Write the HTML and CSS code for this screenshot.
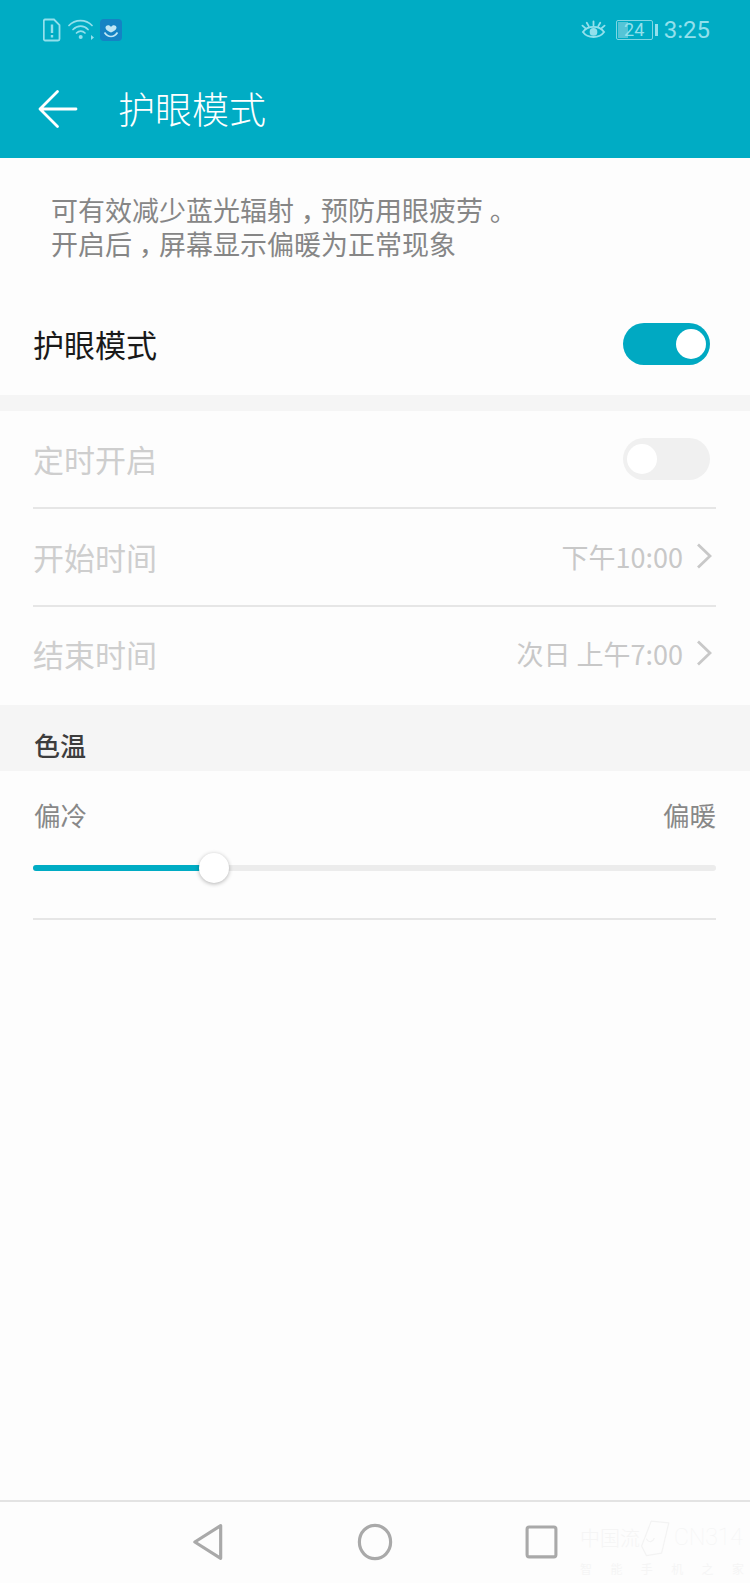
FILE: index.html
```html
<!DOCTYPE html>
<html lang="zh-CN">
<head>
<meta charset="utf-8">
<title>护眼模式</title>
<link rel="stylesheet" href="styles.css">
</head>
<body>
<div class="screen">
  <header class="appbar">
    <div class="status">
      <div class="status-group">
        <svg class="ic-sim" viewBox="0 0 18 24"><path d="M2 1.500h9l5.500 5.500v14a1.500 1.500 0 0 1-1.500 1.500H2A1.500 1.500 0 0 1 .8 21V3A1.500 1.500 0 0 1 2 1.500z" fill="none" stroke="#93e0ec" stroke-width="1.800"/><path d="M9 6.500v8.500M9 17v2.500" stroke="#93e0ec" stroke-width="2.400" fill="none"/></svg>
        <svg class="ic-wifi" viewBox="0 0 27 22"><g fill="none" stroke="#93e0ec" stroke-width="1.700" stroke-linecap="round"><path d="M1 7.500C7 1 18 1 24 7.500"/><path d="M5 11.500c4.500-4.500 11-4.500 15 0"/><path d="M8.500 15c2.500-2.500 6-2.500 8.500 0"/></g><circle cx="12.700" cy="19" r="2" fill="#93e0ec"/><path d="M23 17l3 2.500-3 2.500z" fill="#93e0ec"/></svg>
        <svg class="ic-app" viewBox="0 0 22 22"><rect width="22" height="22" rx="4" fill="#1483c4"/><path d="M11 8c-1.500-3-6-2-5.500 1 .3 2 3.500 3.500 5.500 4.500 2-1 5.200-2.500 5.500-4.500C17 6 12.500 5 11 8z" fill="#bfe6f5"/><path d="M4.500 13.500c2 3 4.500 4 6.500 4s4.500-1 6.500-4" fill="none" stroke="#bfe6f5" stroke-width="1.600"/></svg>
      </div>
      <div class="status-group">
        <svg class="ic-eye" viewBox="0 0 26 22"><g fill="none" stroke="#93e0ec" stroke-width="1.900" stroke-linecap="round"><path d="M2 13c5-7 17-7 22 0-5 7-17 7-22 0z"/><path d="M6 3.500l2 3.500M13 2v4M20 3.500l-2 3.500M1.500 6.500l3 2.500M24.500 6.500l-3 2.500"/></g><circle cx="13" cy="13" r="4" fill="#93e0ec"/></svg>
        <div class="battery">
          <div class="battery-body"><span class="battery-level"></span><span class="battery-num">24</span></div>
          <span class="battery-tip"></span>
        </div>
        <span class="clock">3:25</span>
      </div>
    </div>
    <div class="toolbar">
      <svg class="ic-back" viewBox="0 0 40 40"><path d="M38 20H2M19.500 2.500L2 20l17.500 17.500" fill="none" stroke="#fff" stroke-width="2.800" stroke-linecap="round" stroke-linejoin="round"/></svg>
      <h1 class="title">护眼模式</h1>
    </div>
  </header>

  <main class="content">
    <p class="intro">可有效减少蓝光辐射<span class="punct">，</span>预防用眼疲劳<span class="punct">。</span><br>开启后<span class="punct">，</span>屏幕显示偏暖为正常现象</p>
    <div class="row row-main">
      <span class="label">护眼模式</span>
      <span class="switch switch-on"><span class="knob"></span></span>
    </div>
    <div class="gap"></div>
    <div class="row row-item disabled">
      <span class="label">定时开启</span>
      <span class="switch switch-off"><span class="knob"></span></span>
    </div>
    <div class="row row-item disabled">
      <span class="label">开始时间</span>
      <span class="value">下午10:00<svg class="chev" viewBox="0 0 16 26"><path d="M2 1.500L14 13 2 24.500" fill="none" stroke="#c8c8c8" stroke-width="2.800"/></svg></span>
    </div>
    <div class="row row-item row-last disabled">
      <span class="label">结束时间</span>
      <span class="value">次日 上午7:00<svg class="chev" viewBox="0 0 16 26"><path d="M2 1.500L14 13 2 24.500" fill="none" stroke="#c8c8c8" stroke-width="2.800"/></svg></span>
    </div>
    <div class="section-head">色温</div>
    <div class="temp">
      <div class="temp-labels"><span>偏冷</span><span>偏暖</span></div>
      <div class="slider">
        <div class="slider-fill"></div>
        <div class="slider-knob"></div>
      </div>
    </div>
  </main>

  <footer class="navbar">
    <svg class="nav-ic nav-back" viewBox="0 0 30 36"><path d="M27 2.500v31L2.500 18z" fill="none" stroke="#a9a9a9" stroke-width="3" stroke-linejoin="round"/></svg>
    <svg class="nav-ic nav-home" viewBox="0 0 34 36"><ellipse cx="17" cy="18" rx="14.800" ry="15.800" fill="none" stroke="#a9a9a9" stroke-width="3"/></svg>
    <svg class="nav-ic nav-recent" viewBox="0 0 32 34"><rect x="2" y="2" width="28" height="29" rx="2" fill="none" stroke="#a9a9a9" stroke-width="3"/></svg>
    <div class="watermark">
      <div class="wm-top">
        <span class="wm-cn">中国流</span>
        <svg class="wm-phone" viewBox="0 0 40 48"><path d="M14 3l22 2-9 38-19 3-6-12z" fill="none" stroke="#f3f3f3" stroke-width="1.500" stroke-linejoin="round"/><path d="M8 25c3 6 8 4 10-1" fill="none" stroke="#f3f3f3" stroke-width="1.500"/></svg>
        <span class="wm-en">CN314</span>
      </div>
      <div class="wm-bottom"><span>智</span><span>能</span><span>手</span><span>机</span><span>之</span><span>家</span></div>
    </div>
  </footer>
</div>
</body>
</html>
```

FILE: styles.css
```css
* { box-sizing: border-box; }
html, body { margin: 0; padding: 0; }
body {
  width: 750px;
  height: 1583px;
  overflow: hidden;
  background: #fdfdfd;
  font-family: "Noto Sans CJK SC", "Noto Sans", sans-serif;
}
.screen {
  width: 750px;
  height: 1583px;
  display: flex;
  flex-direction: column;
  background: #fdfdfd;
}

/* App bar */
.appbar {
  height: 158px;
  flex: none;
  background: #00acc4;
  color: #fff;
}
.status {
  height: 60px;
  padding: 15px 40px 0 43px;
  display: flex;
  justify-content: space-between;
  align-items: flex-start;
}
.status-group { display: flex; align-items: center; height: 30px; }
.ic-sim { width: 18px; height: 24px; }
.ic-wifi { width: 27px; height: 22px; margin: 0 0 3px 7px; }
.ic-app { width: 22px; height: 22px; margin-left: 5px; }
.ic-eye { width: 25px; height: 22px; margin-right: 10px; }
.battery { display: flex; align-items: center; gap: 2px; }
.battery-body {
  position: relative;
  width: 37px;
  height: 20px;
  border: 1px solid #7fd6e3;
  border-radius: 2px;
  overflow: hidden;
}
.battery-level {
  position: absolute;
  left: 1px;
  top: 1px;
  bottom: 1px;
  width: 10px;
  background: #55c4d6;
}
.battery-num {
  position: relative;
  display: block;
  font: 18px/18px "Roboto", sans-serif;
  color: #93e0ec;
  text-align: center;
}
.battery-tip { width: 3px; height: 12px; background: #93e0ec; }
.clock {
  margin: 0 0 0 6px;
  font: 24px/30px "Roboto", sans-serif;
  color: #93e0ec;
}
.toolbar {
  height: 98px;
  padding-left: 38px;
  display: flex;
  align-items: center;
}
.ic-back { width: 40px; height: 40px; flex: none; }
.title {
  margin: 0 0 2px 40px;
  font-size: 37px;
  line-height: 50px;
  font-weight: 300;
  color: #fff;
}

/* Content */
.content { flex: 1; }
.intro {
  margin: 0;
  padding: 35px 20px 0 51px;
  height: 132px;
  font-size: 27px;
  line-height: 34px;
  color: #868686;
}
.punct {
  display: inline-block;
  width: 1em;
  text-align: center;
  font-feature-settings: "halt";
}
.row {
  margin: 0 34px 0 33px;
  display: flex;
  align-items: center;
  justify-content: space-between;
}
.row-main { height: 105px; padding-top: 2px; }
.label { font-size: 31px; line-height: 44px; color: #1a1a1a; }
.disabled .label { color: #cecece; }
.gap { height: 16px; background: #f5f5f5; }
.row-item {
  height: 98px;
  border-bottom: 2px solid #e6e6e6;
}
.row-last { border-bottom: 0; padding-bottom: 4px; }
.value {
  display: flex;
  align-items: center;
  padding-bottom: 2px;
  font-size: 27px;
  color: #c8c8c8;
}
.chev { width: 16px; height: 26px; margin-left: 13px; margin-right: 4px; }

.switch {
  position: relative;
  display: block;
  width: 87px;
  height: 42px;
  border-radius: 21px;
  margin-right: 6px;
}
.switch-on { background: #00a9c2; }
.switch-off { background: #f0f0f0; }
.knob {
  position: absolute;
  top: 6px;
  width: 30px;
  height: 30px;
  border-radius: 50%;
  background: #fff;
}
.switch-on .knob { right: 4px; }
.switch-off .knob { left: 4px; }

.section-head {
  height: 66px;
  padding: 20px 34px 0;
  background: #f5f5f5;
  font-size: 26px;
  line-height: 40px;
  font-weight: 500;
  color: #3d3d3d;
}
.temp {
  margin: 0 34px 0 33px;
  height: 149px;
  border-bottom: 2px solid #e6e6e6;
  padding-top: 24px;
}
.temp-labels {
  display: flex;
  justify-content: space-between;
  padding-left: 1px;
  font-size: 26.500px;
  line-height: 40px;
  color: #888;
}
.slider {
  position: relative;
  height: 6px;
  margin-top: 30px;
  border-radius: 3px;
  background: #ececec;
}
.slider-fill {
  position: absolute;
  left: 0;
  top: 0;
  bottom: 0;
  width: 170px;
  border-radius: 3px;
  background: #00acc4;
}
.slider-knob {
  position: absolute;
  left: 166px;
  top: -12px;
  width: 30px;
  height: 30px;
  border-radius: 50%;
  background: #fff;
  box-shadow: 0 1px 4px rgba(0, 0, 0, .3);
}

/* Nav bar */
.navbar {
  position: relative;
  height: 83px;
  flex: none;
  border-top: 2px solid #e3e3e3;
  background: #fdfdfd;
}
.nav-ic { position: absolute; }
.nav-back { left: 192px; top: 21px; width: 32px; height: 38px; }
.nav-home { left: 357px; top: 21px; width: 36px; height: 38px; }
.nav-recent { left: 525px; top: 23px; width: 33px; height: 35px; }
.watermark {
  position: absolute;
  left: 580px;
  top: 13px;
  width: 164px;
  color: #f5f5f5;
}
.wm-top { display: flex; align-items: center; height: 46px; }
.wm-cn { flex: none; font-size: 20px; line-height: 24px; font-weight: 300; white-space: nowrap; }
.wm-phone { width: 32px; height: 46px; flex: none; }
.wm-en { flex: none; font: 100 23px/24px "Roboto", sans-serif; margin-left: 2px; }
.wm-bottom {
  display: flex;
  justify-content: space-between;
  font-size: 12px;
  line-height: 14px;
  margin-top: 1px;
}
```
